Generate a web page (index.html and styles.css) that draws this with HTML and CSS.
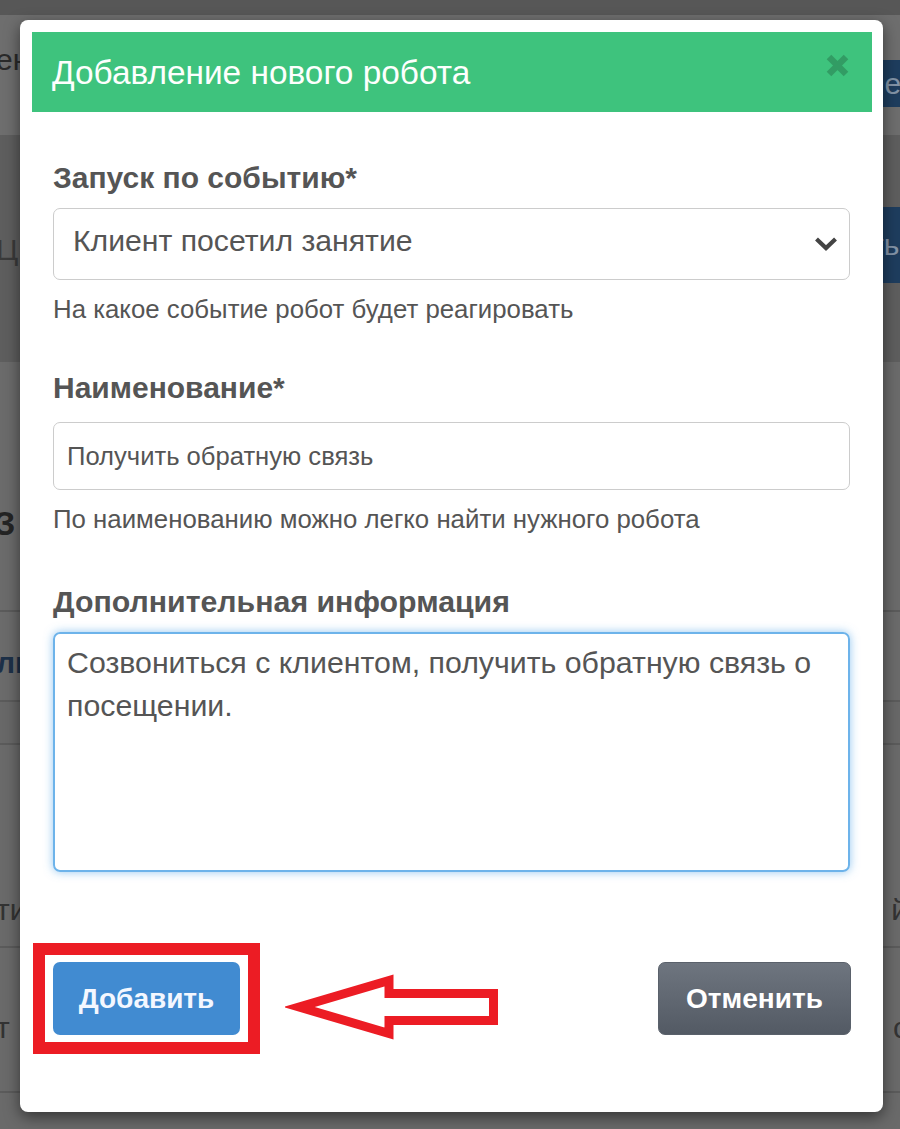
FILE: index.html
```html
<!DOCTYPE html>
<html lang="ru">
<head>
<meta charset="utf-8">
<title>Добавление нового робота</title>
<link rel="stylesheet" href="styles.css">
</head>
<body>
<div class="page">
  <div class="bg-row bg-top"></div>
  <div class="bg-row bg-head">
    <span class="bg-left t1">ен</span>
    <span class="bg-btn b1">не</span>
  </div>
  <div class="bg-row bg-band">
    <span class="bg-left t2">Ц</span>
    <span class="bg-btn b2">ть</span>
  </div>
  <div class="bg-row bg-sec line">
    <span class="bg-left t3">З</span>
  </div>
  <div class="bg-row bg-tab line">
    <span class="bg-left t4">ль</span>
  </div>
  <div class="bg-row bg-gap line"></div>
  <div class="bg-row bg-r1 line">
    <span class="bg-left t5">ти</span>
    <span class="bg-right t5">й</span>
  </div>
  <div class="bg-row bg-r2 line">
    <span class="bg-left t6">т</span>
    <span class="bg-right t6">с</span>
  </div>
  <div class="bg-row bg-end"></div>
</div>

<div class="modal">
  <div class="modal-header">
    <h4 class="modal-title">Добавление нового робота</h4>
    <svg class="close" width="23" height="23" viewBox="0 0 23 23" aria-label="Закрыть">
      <path d="M3 3 L20 20 M20 3 L3 20" stroke="#329c64" stroke-width="6.5" stroke-linecap="butt"/>
    </svg>
  </div>
  <div class="modal-body">
    <div class="label l1">Запуск по событию*</div>
    <div class="select">
      <span class="select-text">Клиент посетил занятие</span>
      <svg class="chev" width="24" height="16" viewBox="0 0 24 16">
        <polyline points="2.5,3 12,12 21.5,3" fill="none" stroke="#444" stroke-width="4.2"/>
      </svg>
    </div>
    <div class="help h1">На какое событие робот будет реагировать</div>

    <div class="label l2">Наименование*</div>
    <div class="input">Получить обратную связь</div>
    <div class="help h2">По наименованию можно легко найти нужного робота</div>

    <div class="label l3">Дополнительная информация</div>
    <div class="textarea">Созвониться с клиентом, получить обратную связь о посещении.</div>

    <div class="footer">
      <div class="highlight">
        <div class="btn btn-primary">Добавить</div>
      </div>
      <svg class="arrow" width="216" height="66" viewBox="0 0 216 66">
        <polygon points="14,33 104,6.5 104,19.5 208.5,19.5 208.5,46.5 104,46.5 104,59.5" fill="none" stroke="#ec1c24" stroke-width="9" stroke-linejoin="miter"/>
      </svg>
      <div class="spacer"></div>
      <div class="btn btn-cancel">Отменить</div>
    </div>
  </div>
</div>
</body>
</html>
```

FILE: styles.css
```css
* { box-sizing: border-box; }
html, body { margin: 0; padding: 0; }
body {
  width: 900px;
  height: 1129px;
  overflow: hidden;
  background: #6a6a6a;
  font-family: "Liberation Sans", Arial, sans-serif;
  position: relative;
}

/* dimmed page behind the dialog */
.page { display: flex; flex-direction: column; width: 900px; }
.bg-row {
  display: flex;
  justify-content: space-between;
  align-items: flex-start;
  width: 900px;
}
.line { border-bottom: 2px solid #5b5b5b; }
.bg-top { height: 15px; background: #575757; }
.bg-head { height: 120px; background: #6e6e6e; }
.bg-band { height: 227px; background: #5e5e5e; }
.bg-sec { height: 250px; background: #6b6b6b; }
.bg-tab { height: 90px; background: #6b6b6b; }
.bg-gap { height: 43px; background: #686868; }
.bg-r1 { height: 203px; background: #6a6a6a; }
.bg-r2 { height: 145px; background: #6a6a6a; }
.bg-end { height: 36px; background: #6a6a6a; }

.bg-left, .bg-right {
  font-size: 30px;
  color: #2e2e2e;
  line-height: 30px;
}
.bg-left { margin-left: -4px; }
.bg-right { margin-right: -8px; }
.t1 { margin-top: 30px; color: #2a2a2a; }
.t2 { margin-top: 100px; color: #3a3a3a; }
.t3 { margin-top: 146px; font-weight: bold; font-size: 34px; color: #242424; margin-left: -6px; }
.t4 { margin-top: 36px; color: #1d3048; font-weight: bold; }
.t5 { margin-top: 150px; color: #333; }
.t6 { margin-top: 65px; color: #333; }

.bg-btn {
  background: #1e3d5e;
  color: #8394a8;
  font-size: 30px;
  display: flex;
  align-items: center;
  width: 40px;
  white-space: nowrap;
  overflow: hidden;
}
.b1 { margin-top: 45px; height: 47px; padding-left: 8px; }
.b2 { margin-top: 72px; height: 76px; padding-left: 10px; }

/* dialog */
.modal {
  position: absolute;
  left: 20px;
  top: 20px;
  width: 863px;
  background: #fff;
  border-radius: 8px;
  box-shadow: 0 5px 15px rgba(0, 0, 0, 0.5);
  padding: 12px 11px 58px 12px;
}
.modal-header {
  height: 80px;
  background: #3ec37d;
  display: flex;
  align-items: center;
  justify-content: space-between;
  padding: 0 23px 0 20px;
}
.modal-title {
  margin: 0;
  font-size: 33.4px;
  font-weight: normal;
  color: #fdfffd;
  line-height: 38px;
  padding-top: 1px;
}
.close { margin-bottom: 13px; }

.modal-body {
  padding: 48px 22px 0 21px;
  display: flex;
  flex-direction: column;
}
.label {
  font-size: 30px;
  font-weight: bold;
  color: #555;
  line-height: 36px;
}
.l1 { margin-bottom: 12px; }
.l2 { margin-top: 46px; margin-bottom: 16px; }
.l3 { margin-top: 50px; margin-bottom: 12px; font-size: 30.3px; }

.select {
  height: 72px;
  border: 1px solid #ccc;
  border-radius: 7px;
  display: flex;
  align-items: center;
  justify-content: space-between;
  padding: 0 11px 6px 19px;
}
.select-text {
  font-size: 30.2px;
  color: #555;
  line-height: 36px;
}
.chev { margin-top: 6px; }

.help {
  font-size: 25.8px;
  color: #555;
  line-height: 30px;
}
.h1 { margin-top: 14px; }
.h2 { margin-top: 14px; }

.input {
  height: 68px;
  border: 1px solid #ccc;
  border-radius: 7px;
  display: flex;
  align-items: center;
  padding: 0 13px;
  font-size: 25.6px;
  color: #555;
}

.textarea {
  height: 240px;
  border: 2px solid #6db3ea;
  border-radius: 7px;
  box-shadow: 0 0 10px rgba(102, 175, 233, 0.7);
  padding: 7px 20px 0 12px;
  font-size: 30.3px;
  line-height: 43px;
  color: #555;
}

.footer {
  margin-top: 71px;
  display: flex;
  align-items: center;
}
.highlight {
  margin-left: -20px;
  border: 12px solid #ec1c24;
  padding: 7px 8px;
}
.btn {
  height: 73px;
  border-radius: 7px;
  display: flex;
  align-items: center;
  justify-content: center;
  font-size: 28px;
  font-weight: bold;
  color: #fff;
}
.btn-primary {
  width: 187px;
  background: #418bd1;
  color: #f3f7ff;
}
.arrow { margin-left: 25px; margin-top: 17px; }
.spacer { flex: 1; }
.btn-cancel {
  width: 193px;
  margin-right: -1px;
  background: linear-gradient(#6e757f, #535a64);
  border: 1px solid #5a616b;
}
```
